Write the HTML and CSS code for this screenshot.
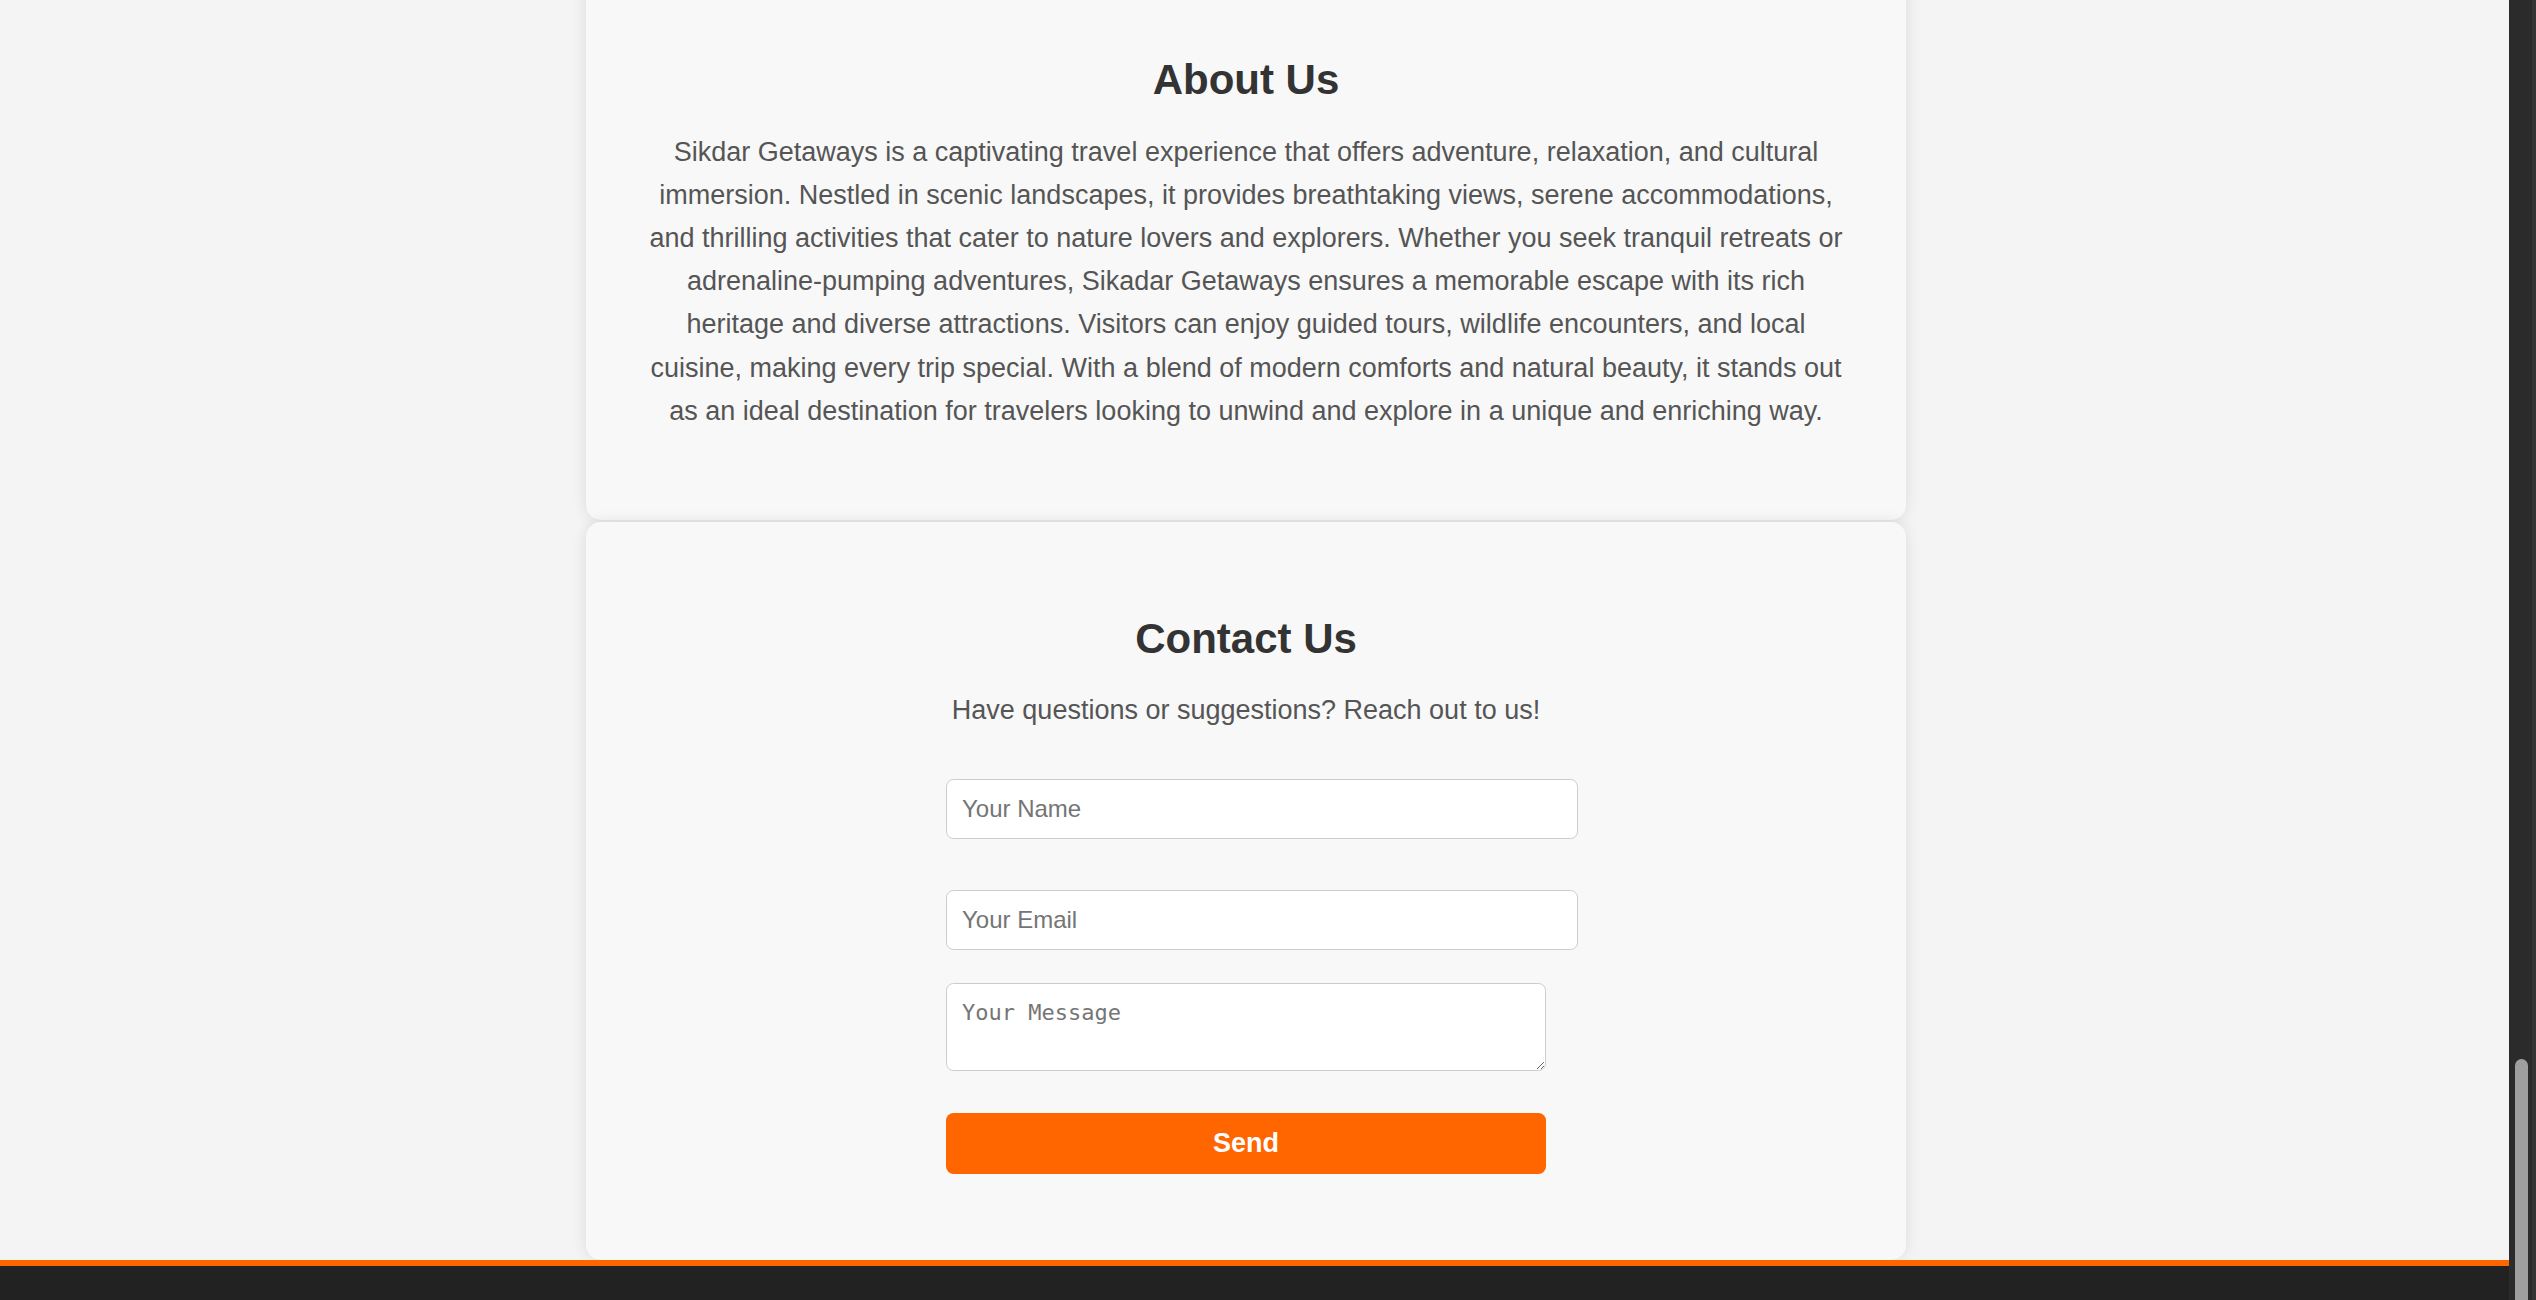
FILE: index.html
```html
<!DOCTYPE html>
<html lang="en">
<head>
<meta charset="utf-8">
<title>Sikdar Getaways</title>
<link rel="stylesheet" href="styles.css">
</head>
<body>
<div class="viewport">
  <div class="page">
    <main class="content">
      <section class="card about">
        <h2 class="card-title">About Us</h2>
        <p class="card-text">Sikdar Getaways is a captivating travel experience that offers adventure, relaxation, and cultural immersion. Nestled in scenic landscapes, it provides breathtaking views, serene accommodations, and thrilling activities that cater to nature lovers and explorers. Whether you seek tranquil retreats or adrenaline-pumping adventures, Sikadar Getaways ensures a memorable escape with its rich heritage and diverse attractions. Visitors can enjoy guided tours, wildlife encounters, and local cuisine, making every trip special. With a blend of modern comforts and natural beauty, it stands out as an ideal destination for travelers looking to unwind and explore in a unique and enriching way.</p>
      </section>
      <section class="card contact">
        <h2 class="card-title">Contact Us</h2>
        <p class="card-text">Have questions or suggestions? Reach out to us!</p>
        <form class="contact-form">
          <input class="field field-name" type="text" placeholder="Your Name">
          <input class="field field-email" type="email" placeholder="Your Email">
          <textarea class="message" placeholder="Your Message"></textarea>
          <button class="send" type="button">Send</button>
        </form>
      </section>
    </main>
    <footer class="footer"></footer>
  </div>
  <div class="scrollbar"><div class="thumb"></div></div>
</div>
</body>
</html>
```

FILE: styles.css
```css
html, body {
  margin: 0;
  padding: 0;
  height: 1300px;
  overflow: hidden;
}

body {
  background: #f4f4f4;
  font-family: "Liberation Sans", Arial, sans-serif;
  color: #333;
}

.viewport {
  display: flex;
  height: 1300px;
}

.page {
  flex: 1;
  display: flex;
  flex-direction: column;
  overflow: hidden;
}

.content {
  width: 1320px;
  margin: -36px 0 0 586px;
  display: flex;
  flex-direction: column;
  gap: 2px;
}

.card {
  background: #f8f8f8;
  border-radius: 15px;
  box-shadow: 0 0 15px rgba(0, 0, 0, 0.1);
  padding: 60px;
  text-align: center;
}

.card-title {
  margin: 32px 0 26.5px;
  font-size: 42px;
  font-weight: bold;
  line-height: normal;
  color: #333;
}

.contact .card-title {
  margin-top: 33px;
}

.card-text {
  margin: 0 0 27px;
  font-size: 27px;
  line-height: 43.2px;
  color: #555;
}

.contact-form {
  width: 600px;
  margin: 46px auto 0;
  display: flex;
  flex-direction: column;
  align-items: flex-start;
  text-align: left;
}

.field {
  box-sizing: content-box;
  width: 100%;
  padding: 15px;
  border: 1px solid #ccc;
  border-radius: 7.5px;
  background: #fff;
  font-family: "Liberation Sans", Arial, sans-serif;
  font-size: 24px;
  line-height: normal;
  color: #333;
  margin: 0;
}

.field::placeholder,
.message::placeholder {
  color: #757575;
}

.field-email {
  margin-top: 51px;
}

.message {
  box-sizing: border-box;
  width: 600px;
  height: 88px;
  margin-top: 33px;
  padding: 15px;
  border: 1px solid #ccc;
  border-radius: 7.5px;
  background: #fff;
  font-family: "DejaVu Sans Mono", "Liberation Mono", monospace;
  font-size: 22px;
  line-height: 28px;
  color: #333;
  resize: vertical;
}

.send {
  width: 600px;
  height: 61px;
  margin: 42px 0 26px;
  border: none;
  border-radius: 7.5px;
  background: #ff6600;
  color: #fff;
  font-family: "Liberation Sans", Arial, sans-serif;
  font-size: 27px;
  font-weight: bold;
  cursor: pointer;
}

.footer {
  flex: 1;
  background: #222;
  border-top: 6px solid #ff6600;
}

.scrollbar {
  width: 27px;
  flex: none;
  background: #2b2b2b;
  border-right: 4px solid #353535;
  box-sizing: border-box;
  display: flex;
  justify-content: center;
}

.thumb {
  width: 13px;
  height: 400px;
  margin-top: 1059px;
  margin-left: 2px;
  border-radius: 6.5px;
  background: #9f9f9f;
}
```
